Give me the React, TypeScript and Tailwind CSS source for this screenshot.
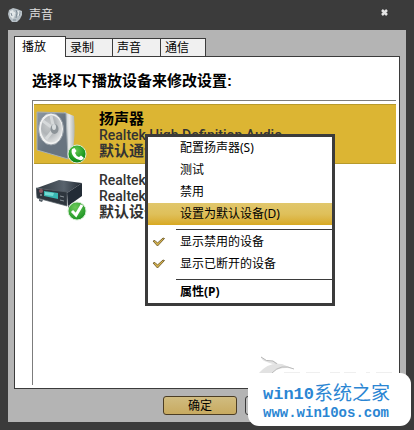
import React from "react";

function SpeakerIcon() {
  return (
    <svg width="52" height="54" viewBox="0 0 52 54" aria-hidden="true">
      <defs>
        <linearGradient id="face" x1="0" y1="0" x2="1" y2="1">
          <stop offset="0" stopColor="#8e99a3" />
          <stop offset=".5" stopColor="#687480" />
          <stop offset="1" stopColor="#687480" />
        </linearGradient>
        <linearGradient id="side" x1="0" y1="0" x2="1" y2="0">
          <stop offset="0" stopColor="#b9bec1" />
          <stop offset=".5" stopColor="#e9ebec" />
          <stop offset="1" stopColor="#b1b5ae" />
        </linearGradient>
        <radialGradient id="cone" cx=".35" cy=".35" r=".7">
          <stop offset="0" stopColor="#c6c9ca" />
          <stop offset=".5" stopColor="#b0b4b7" />
          <stop offset="1" stopColor="#e0e2e3" />
        </radialGradient>
        <radialGradient id="green" cx=".45" cy=".3" r=".8">
          <stop offset="0" stopColor="#63c850" />
          <stop offset=".6" stopColor="#1b9a21" />
          <stop offset="1" stopColor="#0b7114" />
        </radialGradient>
      </defs>
      <path d="M28 1 38 5Q40 24 36 43L31 48Z" fill="url(#side)" />
      <path d="M1 1 30 2 32 48 1 39Z" fill="url(#face)" stroke="#a7b0b5" strokeWidth="1" />
      <ellipse cx="15" cy="18" rx="12.5" ry="16" fill="#f0f1f1" stroke="#929ba3" />
      <ellipse cx="15.5" cy="18" rx="10.5" ry="13.5" fill="url(#cone)" />
      <path d="M18 18 7 10M18 18 10 28M18 18 15 5" stroke="#d6d9da" strokeWidth="3" />
      <ellipse cx="18.5" cy="18" rx="4" ry="5" fill="#8c9398" />
      <ellipse cx="18" cy="16" rx="2" ry="3" fill="#d9dddf" />
      <circle cx="41" cy="43" r="9" fill="url(#green)" stroke="#d9ecd5" />
      <path d="M36 38 38.5 37 40.5 40 39 42Q40 45 43 46L45 44.5 48 47 46 49Q42 50 38 46 34.500 42 36 38Z" fill="#fff" />
    </svg>
  );
}

function ReceiverIcon() {
  return (
    <svg width="52" height="44" viewBox="0 0 52 44" aria-hidden="true">
      <defs>
        <linearGradient id="lid" x1="0" y1="0" x2="1" y2="0">
          <stop offset="0" stopColor="#303940" />
          <stop offset=".6" stopColor="#59636d" />
          <stop offset="1" stopColor="#222a33" />
        </linearGradient>
        <radialGradient id="tick" cx=".4" cy=".3" r=".8">
          <stop offset="0" stopColor="#6dcb5a" />
          <stop offset="1" stopColor="#118c1b" />
        </radialGradient>
      </defs>
      <path d="M1 10 23 2 46 5 31 15Z" fill="url(#lid)" />
      <path d="M31 15 46 5 46 18 32 28Z" fill="#232c36" />
      <path d="M0 10 31 14 31 28 1 20Z" fill="#2e363e" stroke="#59636a" strokeWidth=".7" />
      <path d="M8 13 22 15 22 21 8 18Z" fill="#39b7b2" />
      <path d="M9 14 18 15 17 18 9 17Z" fill="#75dbd3" />
      <circle cx="5" cy="13" r="2" fill="#8e5962" />
      <circle cx="5" cy="17" r="1" fill="#8b949b" />
      <path d="M24 18 28 19M24 22 28 23" stroke="#899298" />
      <path d="M32 28 34 27 34 29 32 30ZM3 21 7 22 6 24 3 23Z" fill="#566068" />
      <circle cx="41" cy="33" r="9" fill="url(#tick)" stroke="#d3ecd0" />
      <path d="M36 33 40 37 46 27" fill="none" stroke="#fff" strokeWidth="3" />
    </svg>
  );
}

function TitleIcon() {
  return (
    <svg width="15" height="15" viewBox="0 0 15 15" aria-hidden="true">
      <path d="M1 2 5 0 9 1 14 3 14 7 12 11 9 14 4 14 1 10 0 6Z" fill="#b7c0c6" />
      <path d="M2 3 5 2 7 7 5 11 2 8Z" fill="#e1e6e8" />
      <path d="M8 2 9 5 8 10M3 5 4 8M12 4 11 8M5 12 8 12" stroke="#7e8c96" fill="none" />
      <path d="M10 3 11 5 10 8M6 4 7 6" stroke="#edf0f1" fill="none" />
    </svg>
  );
}

function CheckMark() {
  return (
    <svg width="13" height="10" viewBox="0 0 13 10" aria-hidden="true">
      <path d="M1 4 3 3.500 5.500 6 11 1 12.500 1.500 5.500 9Z" fill="#d9b54a" stroke="#6d5a2b" strokeWidth=".9" />
    </svg>
  );
}

function MenuItem({ label, checked, active, bold }: { label: string; checked?: boolean; active?: boolean; bold?: boolean }) {
  return (
    <button
      role={checked ? "menuitemcheckbox" : "menuitem"}
      aria-checked={checked ? true : undefined}
      className={`flex h-[22px] w-full items-center text-left text-xs leading-4 text-black ${active ? "bg-linear-to-b from-[#e1c76c] via-[#dfc05a] via-50% to-[#d8a91f]" : ""} ${bold ? "font-bold" : ""}`}
    >
      <span className="flex w-8 shrink-0 pl-1">{checked && <CheckMark />}</span>
      <span className="whitespace-nowrap">{label}</span>
    </button>
  );
}

function Device({ lines, icon, selected }: { lines: string[]; icon: React.ReactNode; selected?: boolean }) {
  return (
    <li className={`flex h-[60px] gap-3 ${selected ? "border-y border-[#b79a2b] bg-[#dcb533]" : ""}`}>
      <span className={`w-[53px] shrink-0 ${selected ? "pt-1.5 pl-0.5" : "pt-3 pl-0.5"}`}>{icon}</span>
      <div className="overflow-hidden pt-1.5 font-['Roboto','Noto_Sans_CJK_SC',sans-serif] text-sm leading-4 font-medium whitespace-nowrap text-[#333333]">
        {lines.map((line, i) => (
          <p key={i} className={line.startsWith("Realtek") ? "" : i === 0 ? "text-[15px] leading-4 font-bold text-black" : "text-[15px] leading-4 font-bold"}>
            {line}
          </p>
        ))}
      </div>
    </li>
  );
}

export default function App() {
  const tab = "h-[19px] border border-l-0 border-[#3b3b3b] bg-[#f0f0f0] pl-1 text-left";
  return (
    <div className="relative flex h-screen flex-col overflow-hidden bg-[#3b3b3b] px-2 pb-2 font-['Liberation_Sans','Noto_Sans_CJK_SC',sans-serif]">
      <header className="flex h-[30px] shrink-0 items-center gap-1.5 text-xs text-[#e0e0e0]">
        <TitleIcon />
        <h1>声音</h1>
        <button aria-label="关闭" className="mr-[18px] mb-1.5 ml-auto">
          <svg width="7" height="7" viewBox="0 0 7 7" aria-hidden="true">
            <path d="M1 1 6 6M6 1 1 6" stroke="#e5e5e5" strokeWidth="2.5" />
          </svg>
        </button>
      </header>

      <main className="flex min-h-0 grow flex-col bg-[#b4b4b4] px-1.5 pt-1.5">
        <div role="tablist" className="z-10 -mb-px flex h-[21px] shrink-0 items-end text-xs">
          <button role="tab" aria-selected="true" className="h-[21px] w-[52px] border border-b-0 border-[#3b3b3b] bg-white pl-[7px] text-left">播放</button>
          <button role="tab" aria-selected="false" className={`w-[47px] ${tab}`}>录制</button>
          <button role="tab" aria-selected="false" className={`w-12 ${tab}`}>声音</button>
          <button role="tab" aria-selected="false" className={`w-[45px] ${tab}`}>通信</button>
        </div>

        <section className="flex min-h-0 grow flex-col border border-[#3b3b3b] bg-white pt-4 pr-[3px] pb-[3px] pl-[17px]">
          <h2 className="text-[15px] leading-4 font-bold text-black">选择以下播放设备来修改设置:</h2>
          <ul className="mt-[11px] flex grow flex-col gap-0.5 border-t border-l border-[#7c7c7c] pt-[3px] pl-px">
            <Device selected icon={<SpeakerIcon />} lines={["扬声器", "Realtek High Definition Audio", "默认通信"]} />
            <Device icon={<ReceiverIcon />} lines={["Realtek", "Realtek", "默认设备"]} />
          </ul>
        </section>

        <footer className="flex h-[33px] shrink-0 items-start justify-end gap-2 pt-[7px] pr-[81px] text-xs">
          <button className="h-[19px] w-[74px] rounded-[3px] border border-[#4b3d24] bg-linear-to-b from-[#d0bc80] to-[#c8aa60] leading-4 text-black">确定</button>
          <button aria-label="取消" className="h-[19px] w-[74px] rounded-[3px] border border-[#3b3b3b] bg-[#c0c0c0]" />
        </footer>
      </main>

      <div role="menu" className="absolute top-[134px] left-[145px] z-20 w-[190px] border-3 border-[#3b3b3b] bg-white font-['Noto_Sans','Noto_Sans_CJK_SC',sans-serif]">
        <MenuItem label="配置扬声器(S)" />
        <MenuItem label="测试" />
        <MenuItem label="禁用" />
        <MenuItem label="设置为默认设备(D)" active />
        <hr className="mt-1 mb-px ml-7 border-[#3b3b3b]" />
        <MenuItem label="显示禁用的设备" checked />
        <MenuItem label="显示已断开的设备" checked />
        <hr className="mt-1 mb-px ml-7 border-[#3b3b3b]" />
        <MenuItem label="属性(P)" bold />
      </div>

      <svg className="absolute right-[20px] bottom-[55px]" width="136" height="20" viewBox="0 0 136 20" aria-hidden="true">
        <path d="M3 2Q8 7 15 6 19 7 21 10 13 9 9 7 4 6 3 2Z" fill="#e3e3e3" />
        <path d="M3 2Q8 7 15 6L19 9" fill="none" stroke="#b4b4b4" />
        <path d="M1 18Q10 7 24 9L36 14Q22 11 14 18Z" fill="#e2e2e2" />
        <path d="M14 18Q23 8 36 14" fill="none" stroke="#bcbcbc" />
        <path d="M26 18H42M48 18H62M72 18H82M86 18H98M108 18H112M118 18H134" stroke="#dedede" />
      </svg>

      <aside className="absolute right-[3px] bottom-1 z-30 flex h-[53px] w-[163px] flex-col items-start rounded-[11px] bg-white pt-3 pl-[15px] font-['Liberation_Mono','Noto_Sans_CJK_SC',monospace] whitespace-nowrap text-[#2b86d3]">
        <p className="flex items-center leading-5">
          <span className="text-[17px] font-bold">win10</span>
          <span className="text-[19px]">系统之家</span>
        </p>
        <a href="#" className="text-sm leading-4 font-bold">www.win10os.com</a>
      </aside>
    </div>
  );
}
